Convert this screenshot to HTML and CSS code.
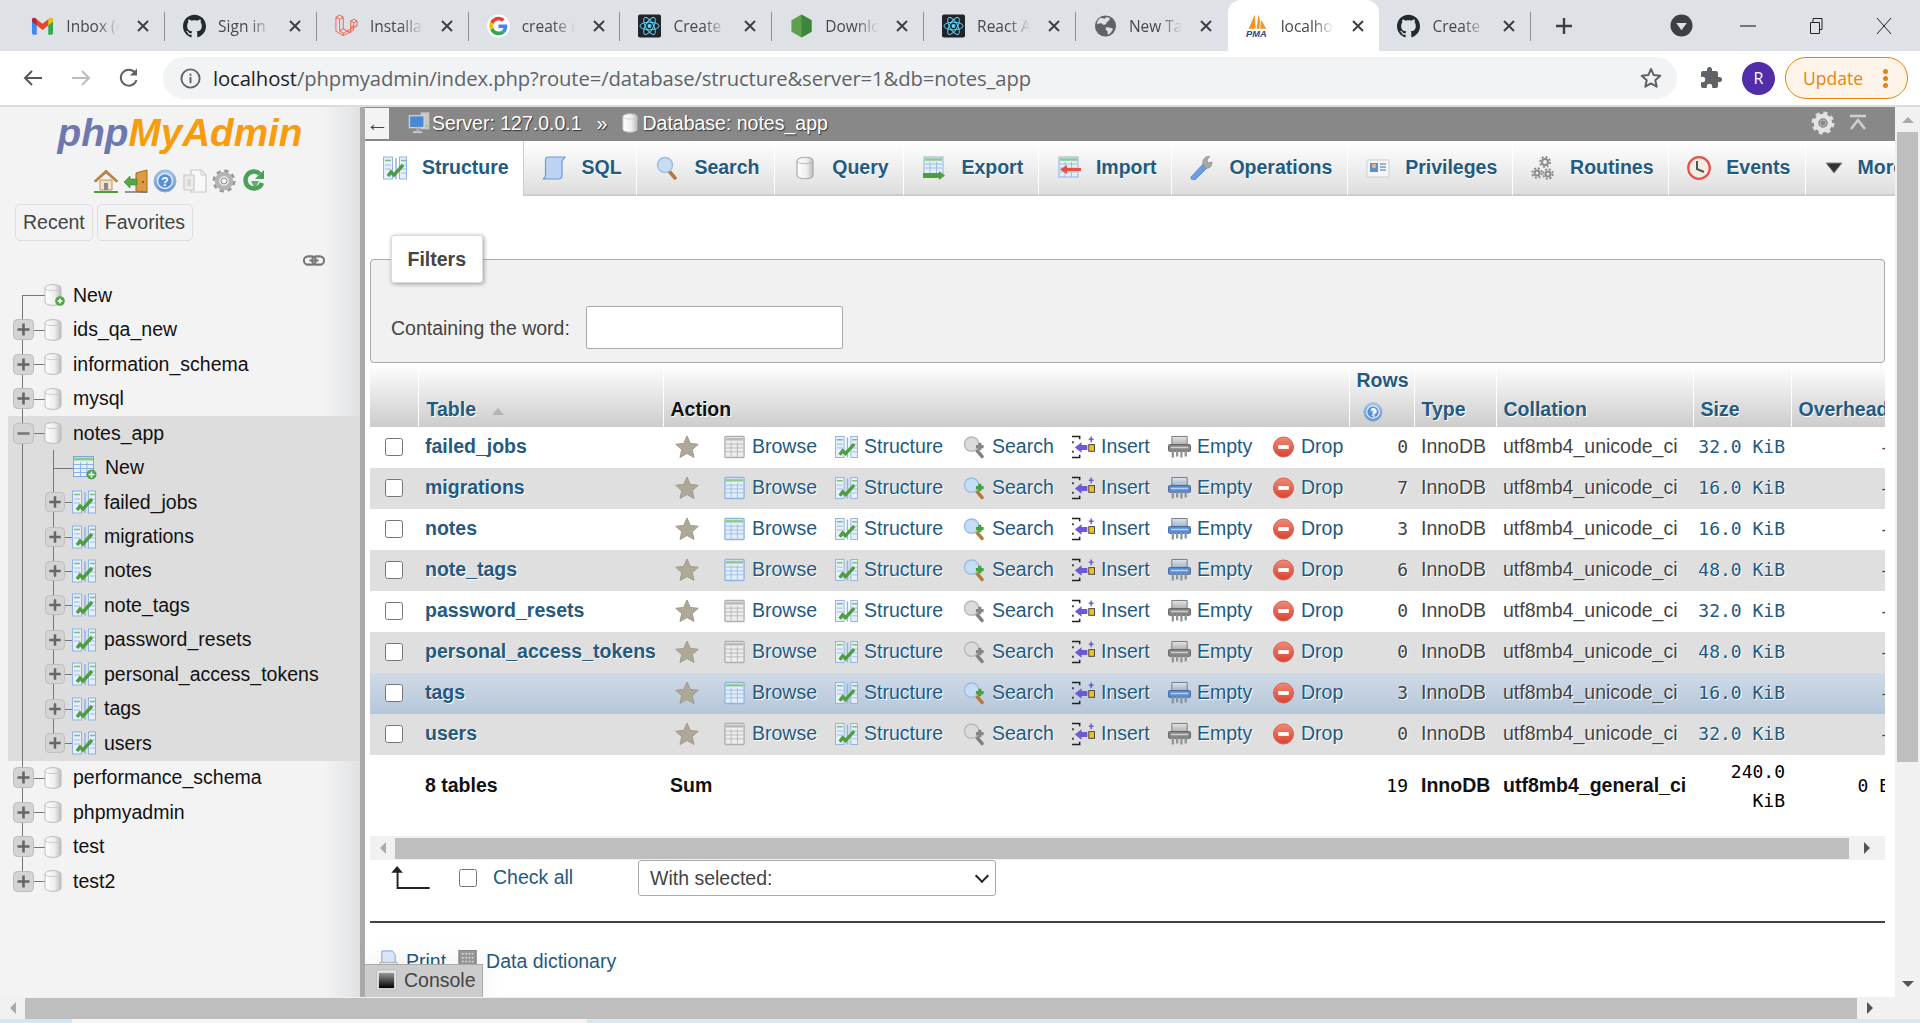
FILE: index.html
```html
<!DOCTYPE html>
<html lang="en">
<head>
<meta charset="utf-8">
<title>localhost / 127.0.0.1 / notes_app | phpMyAdmin</title>
<link rel="stylesheet" href="styles.css">
</head>
<body>
<svg class="defs" aria-hidden="true">
<defs>
<linearGradient id="g-db" x1="0" x2="1" y1="0" y2="0"><stop offset="0" stop-color="#fff"/><stop offset=".6" stop-color="#eee"/><stop offset="1" stop-color="#bbb"/></linearGradient>
<linearGradient id="g-red" x1="0" x2="0" y1="0" y2="1"><stop offset="0" stop-color="#ee8a78"/><stop offset="1" stop-color="#d8432f"/></linearGradient>
<linearGradient id="g-blue" x1="0" x2="0" y1="0" y2="1"><stop offset="0" stop-color="#a9c8ee"/><stop offset="1" stop-color="#5f8fd0"/></linearGradient>
<linearGradient id="g-con" x1="0" x2="0" y1="0" y2="1"><stop offset="0" stop-color="#999"/><stop offset="1" stop-color="#000"/></linearGradient>
<linearGradient id="g-shred" x1="0" x2="0" y1="0" y2="1"><stop offset="0" stop-color="#dfe5ec"/><stop offset="1" stop-color="#9fb0c6"/></linearGradient>
<symbol id="x-close" viewBox="0 0 14 14"><path d="M2 2l10 10M12 2L2 12" stroke="#3c4043" stroke-width="2" fill="none"/></symbol>
<symbol id="f-github" viewBox="0 0 24 24"><path fill="#24292e" d="M12 .297c-6.63 0-12 5.373-12 12 0 5.303 3.438 9.8 8.205 11.385.6.113.82-.258.82-.577 0-.285-.01-1.04-.015-2.04-3.338.724-4.042-1.61-4.042-1.61C4.422 18.07 3.633 17.7 3.633 17.7c-1.087-.744.084-.729.084-.729 1.205.084 1.838 1.236 1.838 1.236 1.07 1.835 2.809 1.305 3.495.998.108-.776.417-1.305.76-1.605-2.665-.3-5.466-1.332-5.466-5.93 0-1.31.465-2.38 1.235-3.22-.135-.303-.54-1.523.105-3.176 0 0 1.005-.322 3.3 1.23.96-.267 1.98-.399 3-.405 1.02.006 2.04.138 3 .405 2.28-1.552 3.285-1.23 3.285-1.23.645 1.653.24 2.873.12 3.176.765.84 1.23 1.91 1.23 3.22 0 4.61-2.805 5.625-5.475 5.92.42.36.81 1.096.81 2.22 0 1.606-.015 2.896-.015 3.286 0 .315.21.69.825.57C20.565 22.092 24 17.592 24 12.297c0-6.627-5.373-12-12-12"/></symbol>
<symbol id="f-gmail" viewBox="0 0 24 24"><path fill="#4285f4" d="M1 5.5C1 3.5 3.2 2.6 4.6 3.9L6 5v16H2.6C1.7 21 1 20.3 1 19.4z"/><path fill="#34a853" d="M18 5l1.4-1.1C20.8 2.6 23 3.5 23 5.5v13.9c0 .9-.7 1.6-1.6 1.6H18z"/><path fill="#ea4335" d="M6 5l6 4.7L18 5v6.5l-6 4.7-6-4.7z"/><path fill="#fbbc04" d="M18 5l1.4-1.1C20.8 2.6 23 3.5 23 5.5v1.7l-5 4.3z"/><path fill="#c5221f" d="M1 5.5C1 3.5 3.2 2.6 4.6 3.9L6 5v6.5L1 7.2z"/></symbol>
<symbol id="f-laravel" viewBox="0 0 25 26"><path fill="none" stroke="#ef6a5c" stroke-width="1.1" stroke-linejoin="round" d="M1 3.5l4-2.3 4 2.300v12.500l8 4.500M1 3.500v15l8 5 11-6V13l-3 1.700M5 5.800l4-2.300M1 3.500l4 2.300v12.500l4 2.500m0 2.700v-2.700l11-6M5 18.300l4-2.300m8 4.500V7.500m0 0l3.500-2 3.500 2v5.200l-3.500 2M17 7.500l3.500 1.800 3.500-1.800m-3.500 1.800v5"/></symbol>
<symbol id="f-google" viewBox="-6 -6 60 60"><circle cx="24" cy="24" r="30" fill="#fff"/><path fill="#EA4335" d="M24 9.500c3.540 0 6.710 1.220 9.210 3.600l6.850-6.850C35.900 2.380 30.470 0 24 0 14.620 0 6.510 5.380 2.560 13.220l7.980 6.190C12.430 13.720 17.740 9.500 24 9.500z"/><path fill="#4285F4" d="M46.980 24.550c0-1.570-.15-3.090-.38-4.550H24v9.020h12.940c-.58 2.960-2.260 5.480-4.780 7.180l7.730 6c4.510-4.180 7.090-10.360 7.090-17.650z"/><path fill="#FBBC05" d="M10.530 28.590c-.48-1.450-.76-2.990-.76-4.590s.27-3.140.76-4.590l-7.980-6.190C.92 16.460 0 20.120 0 24c0 3.880.92 7.540 2.560 10.780l7.970-6.190z"/><path fill="#34A853" d="M24 48c6.480 0 11.930-2.130 15.890-5.810l-7.730-6c-2.150 1.450-4.920 2.300-8.160 2.300-6.260 0-11.570-4.220-13.470-9.910l-7.980 6.190C6.510 42.620 14.620 48 24 48z"/></symbol>
<symbol id="f-react" viewBox="0 0 24 24"><rect width="24" height="24" rx="2" fill="#20232a"/><g fill="none" stroke="#61dafb" stroke-width="1"><ellipse cx="12" cy="12" rx="10" ry="4"/><ellipse cx="12" cy="12" rx="10" ry="4" transform="rotate(60 12 12)"/><ellipse cx="12" cy="12" rx="10" ry="4" transform="rotate(120 12 12)"/></g><circle cx="12" cy="12" r="2" fill="#61dafb"/></symbol>
<symbol id="f-node" viewBox="0 0 24 24"><path fill="#5fa04e" d="M12 0l10.500 6v12L12 24 1.500 18V6z"/><path fill="#3e863d" d="M12 0l10.500 6v12L12 24z"/></symbol>
<symbol id="f-globe" viewBox="0 0 24 24"><circle cx="12" cy="12" r="11" fill="#5f6368"/><path fill="#dee1e6" d="M7 3.500l4 1 2-2 4 1.500-2 3-2 1v2l-3 1-2-2-3 .5-2 1c0-3 1.500-5.500 4-7zM13 13l5 1 2 1-2.500 4-3 2.500-.5-4-2-2z"/></symbol>
<symbol id="f-pma" viewBox="0 0 26 26"><path fill="#f7941d" d="M3 16L10 0l1 16zM12 16l2-16 2 8-1 8zM16 16l1-10 6 10z"/><text x="0" y="25" font-family="Liberation Sans, sans-serif" font-size="10.500" font-weight="700" font-style="italic" fill="#2f3f86">PMA</text></symbol>
<symbol id="b-back" viewBox="0 0 24 24"><path d="M21 12H4m7-7l-7 7 7 7" fill="none" stroke="currentColor" stroke-width="2"/></symbol>
<symbol id="b-fwd" viewBox="0 0 24 24"><path d="M3 12h17m-7-7l7 7-7 7" fill="none" stroke="currentColor" stroke-width="2"/></symbol>
<symbol id="b-reload" viewBox="0 0 24 24"><path d="M19.500 14A8 8 0 1 1 18 6.500" fill="none" stroke="#5f6368" stroke-width="2"/><path d="M20 2.500v7h-7z" fill="#5f6368"/></symbol>
<symbol id="b-info" viewBox="0 0 24 24"><circle cx="12" cy="12" r="9.500" fill="none" stroke="#5f6368" stroke-width="2"/><path d="M11 10.500h2V17h-2zM11 7h2v2h-2z" fill="#5f6368"/></symbol>
<symbol id="b-star" viewBox="0 0 24 24"><path d="M12 3l2.700 6.100 6.600.7-5 4.400 1.400 6.500L12 17.400 6.300 20.700l1.400-6.500-5-4.400 6.600-.7z" fill="none" stroke="#5f6368" stroke-width="2" stroke-linejoin="round"/></symbol>
<symbol id="b-puzzle" viewBox="0 0 24 24"><path fill="#5f6368" d="M20.500 11H19V7a2 2 0 0 0-2-2h-4V3.500a2.500 2.500 0 0 0-5 0V5H4a2 2 0 0 0-2 2v3.800h1.500a2.700 2.700 0 0 1 0 5.400H2V20a2 2 0 0 0 2 2h3.800v-1.500a2.700 2.700 0 0 1 5.400 0V22H17a2 2 0 0 0 2-2v-4h1.500a2.500 2.500 0 0 0 0-5z"/></symbol>
<symbol id="i-db" viewBox="0 0 18 22"><path d="M1 4c0-4.500 16-4.500 16 0v14c0 4.500-16 4.500-16 0z" fill="url(#g-db)" stroke="#bbb"/><path d="M1 4c0 3.500 16 3.500 16 0" fill="none" stroke="#ccc"/></symbol>
<symbol id="i-dbnew" viewBox="0 0 21 22"><path d="M1 4c0-4.500 16-4.500 16 0v14c0 4.500-16 4.500-16 0z" fill="url(#g-db)" stroke="#bbb"/><path d="M1 4c0 3.500 16 3.500 16 0" fill="none" stroke="#ccc"/><circle cx="16" cy="17" r="4.800" fill="#4fa544"/><path d="M13.500 17h5M16 14.500v5" stroke="#fff" stroke-width="1.500"/></symbol>
<symbol id="i-plus" viewBox="0 0 21 21"><rect x=".5" y=".5" width="20" height="20" rx="4" fill="#d4d4d4" stroke="#bdbdbd"/><path d="M4.500 10.500h12M10.500 4.500v12" stroke="#666" stroke-width="2.600"/></symbol>
<symbol id="i-minus" viewBox="0 0 21 21"><rect x=".5" y=".5" width="20" height="20" rx="4" fill="#d4d4d4" stroke="#bdbdbd"/><path d="M4.500 10.500h12" stroke="#777" stroke-width="2.600"/></symbol>
<symbol id="i-struct" viewBox="0 0 24 24"><rect x=".5" y="1" width="9" height="22" fill="#e6effa" stroke="#8fb3e4"/><rect x="16.500" y="1" width="7" height="22" fill="#e6effa" stroke="#8fb3e4"/><path d="M2 4.500h6M18 4.500h5" stroke="#7ec07a" stroke-width="1.500"/><path d="M2 9h6M2 13h6M18 9h5M18 13h5M18 17h5" stroke="#9dbde6"/><path d="M13 2v21" stroke="#8fb3e4" stroke-width="1.500"/><path d="M5 20l3-4 3 3 9-10" fill="none" stroke="#4f9e3d" stroke-width="3.400"/></symbol>
<symbol id="i-tnew" viewBox="0 0 24 24"><rect x=".5" y=".5" width="20" height="20" fill="#e6effa" stroke="#7fa6de"/><path d="M1 3h19" stroke="#8ec98a" stroke-width="3"/><path d="M1 8.500h19M1 12.500h19M1 16.500h19M7.500 6v14M14 6v14" stroke="#8fb3e4"/><circle cx="18.500" cy="18.500" r="5" fill="#4fa544"/><path d="M15.500 18.500h6M18.500 15.500v6" stroke="#fff" stroke-width="1.600"/></symbol>
<symbol id="i-browse" viewBox="0 0 24 24"><rect x="2" y="1" width="20" height="22" rx="1" fill="#e3eefb" stroke="#8fb3e4" stroke-width="1.400"/><path d="M3 4h18" stroke="#8ec98a" stroke-width="2.500"/><path d="M3 9h18M3 13h18M3 17h18M8.500 7v15M15 7v15" stroke="#9dbde6"/></symbol>
<symbol id="i-search" viewBox="0 0 24 24"><path d="M14 15l6 7" stroke="#b5793a" stroke-width="3.500" stroke-linecap="round"/><circle cx="9" cy="9" r="7.500" fill="#c6def5" stroke="#9dbde0" stroke-width="1.500"/><path d="M13.500 11.500h8M17.500 7.500v8" stroke="#49a03e" stroke-width="3.400"/></symbol>
<symbol id="i-find" viewBox="0 0 24 24"><path d="M14 15l6 7" stroke="#b5793a" stroke-width="3.500" stroke-linecap="round"/><circle cx="10" cy="9" r="7.500" fill="#c6def5" stroke="#9dbde0" stroke-width="1.500"/></symbol>
<symbol id="i-insert" viewBox="0 0 24 24"><path d="M0 1h8v3M0 23h8v-3" fill="none" stroke="#222" stroke-width="1.600"/><path d="M1 6v2M1 16v2" stroke="#222" stroke-width="1.600"/><path d="M3 12.500l7-5.500v3h6v5h-6v3z" fill="#6a5ad6"/><rect x="17.500" y="9.500" width="6" height="7" fill="#f0c020" stroke="#444"/><path d="M20 1v6M17.500 4h5" stroke="#6a5ad6" stroke-width="1.500"/></symbol>
<symbol id="i-empty" viewBox="0 0 24 24"><path d="M4 1h16v9H4z" fill="url(#g-shred)" stroke="#6d7a8c"/><rect x=".5" y="9.500" width="23" height="7" rx="1" fill="#5b8ed6" stroke="#47659a"/><path d="M3 12.500h18" stroke="#bcd4f4" stroke-width="1.500"/><path d="M5 16v7M9.500 16v6M14 16v7M18.500 16v6" stroke="#8b95a0" stroke-width="2.400"/></symbol>
<symbol id="i-drop" viewBox="0 0 24 24"><circle cx="12" cy="12" r="10.500" fill="url(#g-red)" stroke="#d8604f"/><rect x="6.500" y="10" width="11" height="4" fill="#fff"/></symbol>
<symbol id="i-fav" viewBox="0 0 24 24"><path d="M12 1l3.300 7.400 8 .9-6 5.300 1.700 7.900L12 18.500l-7 4 1.700-7.900-6-5.300 8-.9z" fill="#aea898" stroke="#a19b8b" stroke-linejoin="round"/></symbol>
<symbol id="i-help" viewBox="0 0 24 24"><circle cx="12" cy="12" r="11" fill="url(#g-blue)" stroke="#8fb4e4"/><circle cx="12" cy="12" r="7.500" fill="#5a8fd2" stroke="#e2edfa" stroke-width="1.500"/><text x="12" y="16.500" text-anchor="middle" font-family="Liberation Sans, sans-serif" font-size="12" font-weight="700" fill="#fff">?</text></symbol>
<symbol id="i-home" viewBox="0 0 24 24"><path d="M6 11h12v10H6z" fill="#efe2c8" stroke="#b59a6a"/><rect x="10" y="14" width="4" height="7" fill="#888"/><path d="M0 12L12 1l12 11-2 1L12 4 2 13z" fill="#c5863c" stroke="#9a6427" stroke-width=".6"/><path d="M0 22h24v2H0z" fill="#4f9e3d"/></symbol>
<symbol id="i-exit" viewBox="0 0 24 24"><path d="M12 4l11-3v23l-11-2z" fill="#dd9b3f" stroke="#a26d20"/><path d="M1 23h22" stroke="#777" stroke-width="1.500"/><path d="M0 13l6-6v3h7v6H6v3z" fill="#55a844" stroke="#3d7e30" stroke-width=".6"/><circle cx="19" cy="13" r="1" fill="#6b4410"/></symbol>
<symbol id="i-docs" viewBox="0 0 24 24"><path d="M8 1h10l5 5v17H8z" fill="#f8f8f8" stroke="#c9c9c9" stroke-width="1.200"/><path d="M1 6h10v15H1z" fill="#ececec" stroke="#c9c9c9" stroke-width="1.200"/><rect x="4" y="10" width="4" height="7" fill="#d8d8d8"/><path d="M18 1v5h5" fill="none" stroke="#c9c9c9"/></symbol>
<symbol id="i-gear" viewBox="0 0 24 24"><circle cx="12" cy="12" r="9.500" fill="none" stroke="#9a9a9a" stroke-width="4" stroke-dasharray="4 3.460"/><circle cx="12" cy="12" r="7" fill="none" stroke="#b5b5b5" stroke-width="4.500"/><circle cx="12" cy="12" r="3" fill="#f2f2f2" stroke="#8a8a8a"/></symbol>
<symbol id="i-gearw" viewBox="0 0 24 24"><circle cx="12" cy="12" r="9.500" fill="none" stroke="#ddd" stroke-width="4" stroke-dasharray="4 3.460"/><circle cx="12" cy="12" r="7" fill="none" stroke="#e4e4e4" stroke-width="4.500"/><circle cx="12" cy="12" r="3" fill="#888" stroke="#bbb"/></symbol>
<symbol id="i-reload" viewBox="0 0 24 24"><path d="M20 14a8.500 8.500 0 1 1-2-9" fill="none" stroke="#4aa05a" stroke-width="4.500"/><path d="M22 1v9h-9z" fill="#4aa05a"/><path d="M9 12h8l-4 8z" fill="#4aa05a" opacity=".85"/></symbol>
<symbol id="i-link" viewBox="0 0 24 12"><rect x="1" y="1.500" width="13" height="9" rx="4.500" fill="none" stroke="#777" stroke-width="2.200"/><rect x="10" y="1.500" width="13" height="9" rx="4.500" fill="none" stroke="#777" stroke-width="2.200"/><path d="M7 6h10" stroke="#777" stroke-width="2.200"/></symbol>
<symbol id="i-server" viewBox="0 0 24 24"><rect x="13" y="0" width="10" height="19" fill="#c8c8c8" stroke="#999"/><rect x="1" y="4" width="16" height="13" fill="#4a88d8" stroke="#d0d0d0" stroke-width="1.500"/><path d="M5 21h10v2H5z" fill="#ccc"/><path d="M8 17h4v4H8z" fill="#aaa"/><circle cx="20" cy="15" r="1" fill="#6c6"/></symbol>
<symbol id="i-sql" viewBox="0 0 24 24"><path d="M6 1h17l-3 4v14c0 3-2 4-4 4H1c2-1 2.500-2 2.500-4V4C3.500 2 4.500 1 6 1z" fill="#bcd3f1" stroke="#6f9ad6" stroke-width="1.200"/></symbol>
<symbol id="i-qdb" viewBox="0 0 24 24"><path d="M4 5c0-5 16-5 16 0v14c0 5-16 5-16 0z" fill="url(#g-db)" stroke="#a8a8a8" stroke-width="1.200"/><path d="M4 5c0 3.500 16 3.500 16 0" fill="none" stroke="#bbb"/></symbol>
<symbol id="i-export" viewBox="0 0 24 24"><rect x="2" y="1" width="19" height="17" fill="#e3eefb" stroke="#8fb3e4"/><path d="M3 3.500h17" stroke="#8ec98a" stroke-width="2.500"/><path d="M3 8h17M3 12h17M8 6v12M14.500 6v12" stroke="#9dbde6"/><path d="M1 17h16v-2l6 4.500-6 4.500v-2H1z" fill="#4f9e3d"/></symbol>
<symbol id="i-import" viewBox="0 0 24 24"><rect x="2" y="1" width="19" height="20" fill="#e3eefb" stroke="#8fb3e4"/><path d="M3 3.500h17" stroke="#8ec98a" stroke-width="2.500"/><path d="M3 8h17M3 12h17M3 16h17M8 6v15M14.500 6v15" stroke="#9dbde6"/><path d="M24 12H10V9l-7 4.500 7 4.500v-3h14z" fill="#e8503f"/></symbol>
<symbol id="i-wrench" viewBox="0 0 24 24"><path d="M1 21L13 8l4 4L5 24c-2 1-5-1-4-3z" fill="#6d9de0" stroke="#4f7dc0" stroke-width=".7"/><path d="M13 8c-1-4 2-8 7-8l-3 4 1 3 4-1c0 5-3 7-7 6z" fill="#a8a8a8" stroke="#888" stroke-width=".7"/></symbol>
<symbol id="i-priv" viewBox="0 0 24 24"><rect x="1" y="4" width="22" height="17" rx="1" fill="#f6f6f6" stroke="#cfcfcf"/><rect x="4" y="7" width="8" height="9" fill="#5b8fd0"/><circle cx="8" cy="10" r="2.200" fill="#e6b88a"/><path d="M14 8h6M14 11h6M14 14h6" stroke="#7a9cc6" stroke-width="1.500"/></symbol>
<symbol id="i-routines" viewBox="0 0 24 24"><g fill="none" stroke="#8a8a8a"><circle cx="14" cy="6" r="3" stroke-width="2"/><circle cx="14" cy="6" r="5" stroke-width="1.800" stroke-dasharray="2 1.900"/><circle cx="6" cy="17" r="2.500" stroke-width="2"/><circle cx="6" cy="17" r="4.800" stroke-width="1.800" stroke-dasharray="2 1.800"/><circle cx="17" cy="18" r="2.500" stroke-width="2"/><circle cx="17" cy="18" r="4.800" stroke-width="1.800" stroke-dasharray="2 1.800"/></g></symbol>
<symbol id="i-clock" viewBox="0 0 24 24"><circle cx="12" cy="12" r="10.800" fill="#f1eee6" stroke="#e8504a" stroke-width="2.200"/><path d="M10 5v8l7 3" fill="none" stroke="#555" stroke-width="2"/></symbol>
<symbol id="i-tri" viewBox="0 0 18 12"><path d="M1 1h16L9 11z" fill="#333" stroke="#888"/></symbol>
<symbol id="i-print" viewBox="0 0 24 24"><path d="M5 1h11l3 4v9H5z" fill="#dfeafa" stroke="#7ea4dc"/><path d="M0 24l3-11h18l3 11z" fill="#eee" stroke="#b9b9b9"/></symbol>
<symbol id="i-dict" viewBox="0 0 24 24"><rect x="2" y="0" width="18" height="18" fill="#9a9a9a" stroke="#777"/><path d="M5 4h12M5 8h12M5 12h12" stroke="#dedede" stroke-width="1.500" stroke-dasharray="2 1.500"/><rect x="0" y="16" width="24" height="8" fill="#aab3dc"/><rect x="16" y="18" width="6" height="6" fill="#fff" stroke="#444"/></symbol>
<symbol id="i-console" viewBox="0 0 22 22"><rect x=".5" y=".5" width="21" height="21" rx="2" fill="#e6e6e6" stroke="#bbb"/><rect x="3" y="3.500" width="16" height="16" fill="url(#g-con)"/></symbol>
<symbol id="i-ltr" viewBox="0 0 42 24"><path d="M7 0l6 7H8.500v15H41v2H6.500V7H1z" fill="#222"/></symbol>
</defs>
</svg>

<header class="tabstrip">
  <div class="tab"><svg class="fav"><use href="#f-gmail"/></svg><span class="tab-title">Inbox (4)</span><svg class="tab-x"><use href="#x-close"/></svg></div>
  <div class="tab"><svg class="fav"><use href="#f-github"/></svg><span class="tab-title">Sign in to GitHub</span><svg class="tab-x"><use href="#x-close"/></svg></div>
  <div class="tab"><svg class="fav"><use href="#f-laravel"/></svg><span class="tab-title">Installation</span><svg class="tab-x"><use href="#x-close"/></svg></div>
  <div class="tab"><svg class="fav"><use href="#f-google"/></svg><span class="tab-title">create react</span><svg class="tab-x"><use href="#x-close"/></svg></div>
  <div class="tab"><svg class="fav"><use href="#f-react"/></svg><span class="tab-title">Create a New</span><svg class="tab-x"><use href="#x-close"/></svg></div>
  <div class="tab"><svg class="fav"><use href="#f-node"/></svg><span class="tab-title">Download</span><svg class="tab-x"><use href="#x-close"/></svg></div>
  <div class="tab"><svg class="fav"><use href="#f-react"/></svg><span class="tab-title">React App</span><svg class="tab-x"><use href="#x-close"/></svg></div>
  <div class="tab tab-nosep"><svg class="fav"><use href="#f-globe"/></svg><span class="tab-title">New Tab</span><svg class="tab-x"><use href="#x-close"/></svg></div>
  <div class="tab tab-active"><svg class="fav"><use href="#f-pma"/></svg><span class="tab-title">localhost</span><svg class="tab-x"><use href="#x-close"/></svg></div>
  <div class="tab"><svg class="fav"><use href="#f-github"/></svg><span class="tab-title">Create a new</span><svg class="tab-x"><use href="#x-close"/></svg></div>
  <svg class="newtab" viewBox="0 0 20 20"><path d="M10 2v16M2 10h16" stroke="#3c4043" stroke-width="2.400"/></svg>
  <svg class="tabsearch" viewBox="0 0 24 24"><circle cx="12" cy="12" r="11.500" fill="#3c4043"/><path d="M6.500 9.500h11L12 17z" fill="#dee1e6"/></svg>
  <div class="winbtns">
    <svg viewBox="0 0 14 14"><path d="M0 7h14" stroke="#222"/></svg>
    <svg viewBox="0 0 14 16"><path d="M1.500 4.500h9v11h-9zM4 4.500v-4h9v11h-2.500" fill="none" stroke="#222"/></svg>
    <svg viewBox="0 0 16 16"><path d="M1 0l14 16M15 0L1 16" stroke="#222"/></svg>
  </div>
</header>

<nav class="toolbar">
  <svg class="tb-ic tb-dark"><use href="#b-back"/></svg>
  <svg class="tb-ic tb-dim"><use href="#b-fwd"/></svg>
  <svg class="tb-ic"><use href="#b-reload"/></svg>
  <div class="omnibox">
    <svg class="omni-info"><use href="#b-info"/></svg>
    <span class="url"><b>localhost</b>/phpmyadmin/index.php?route=/database/structure&amp;server=1&amp;db=notes_app</span>
    <svg class="omni-star"><use href="#b-star"/></svg>
  </div>
  <svg class="tb-puzzle"><use href="#b-puzzle"/></svg>
  <span class="avatar">R</span>
  <div class="update"><span>Update</span><i class="dots"></i></div>
</nav>
<div class="chrome-line"></div>

<div class="viewport">
  <aside class="sidebar">
    <div class="logo"><span class="logo-php">php</span><span class="logo-my">MyAdmin</span></div>
    <div class="quick">
      <svg><use href="#i-home"/></svg><svg><use href="#i-exit"/></svg><svg><use href="#i-help"/></svg><svg><use href="#i-docs"/></svg><svg><use href="#i-gear"/></svg><svg><use href="#i-reload"/></svg>
    </div>
    <div class="recent"><button>Recent</button><button>Favorites</button></div>
    <div class="linkrow"><svg><use href="#i-link"/></svg></div>
    <ul class="tree">
      <li class="node node-first node-new"><svg class="dbicon-new"><use href="#i-dbnew"/></svg><a>New</a></li>
      <li class="node"><svg class="exp"><use href="#i-plus"/></svg><svg class="dbicon"><use href="#i-db"/></svg><a>ids_qa_new</a></li>
      <li class="node"><svg class="exp"><use href="#i-plus"/></svg><svg class="dbicon"><use href="#i-db"/></svg><a>information_schema</a></li>
      <li class="node"><svg class="exp"><use href="#i-plus"/></svg><svg class="dbicon"><use href="#i-db"/></svg><a>mysql</a></li>
      <li class="group">
        <div class="node"><svg class="exp"><use href="#i-minus"/></svg><svg class="dbicon"><use href="#i-db"/></svg><a>notes_app</a></div>
        <ul class="sub">
          <li class="node2 node2-new"><svg class="tbl"><use href="#i-tnew"/></svg><a>New</a></li>
          <li class="node2"><svg class="exp2"><use href="#i-plus"/></svg><svg class="tbl"><use href="#i-struct"/></svg><a>failed_jobs</a></li>
          <li class="node2"><svg class="exp2"><use href="#i-plus"/></svg><svg class="tbl"><use href="#i-struct"/></svg><a>migrations</a></li>
          <li class="node2"><svg class="exp2"><use href="#i-plus"/></svg><svg class="tbl"><use href="#i-struct"/></svg><a>notes</a></li>
          <li class="node2"><svg class="exp2"><use href="#i-plus"/></svg><svg class="tbl"><use href="#i-struct"/></svg><a>note_tags</a></li>
          <li class="node2"><svg class="exp2"><use href="#i-plus"/></svg><svg class="tbl"><use href="#i-struct"/></svg><a>password_resets</a></li>
          <li class="node2"><svg class="exp2"><use href="#i-plus"/></svg><svg class="tbl"><use href="#i-struct"/></svg><a>personal_access_tokens</a></li>
          <li class="node2"><svg class="exp2"><use href="#i-plus"/></svg><svg class="tbl"><use href="#i-struct"/></svg><a>tags</a></li>
          <li class="node2 node2-last"><svg class="exp2"><use href="#i-plus"/></svg><svg class="tbl"><use href="#i-struct"/></svg><a>users</a></li>
        </ul>
      </li>
      <li class="node"><svg class="exp"><use href="#i-plus"/></svg><svg class="dbicon"><use href="#i-db"/></svg><a>performance_schema</a></li>
      <li class="node"><svg class="exp"><use href="#i-plus"/></svg><svg class="dbicon"><use href="#i-db"/></svg><a>phpmyadmin</a></li>
      <li class="node"><svg class="exp"><use href="#i-plus"/></svg><svg class="dbicon"><use href="#i-db"/></svg><a>test</a></li>
      <li class="node node-last"><svg class="exp"><use href="#i-plus"/></svg><svg class="dbicon"><use href="#i-db"/></svg><a>test2</a></li>
    </ul>
  </aside>
  <div class="gutter"></div>

  <main class="content">
    <div class="topbar">
      <span class="collapse">←</span>
      <svg class="crumb-server"><use href="#i-server"/></svg><span class="crumb">Server: 127.0.0.1</span>
      <span class="crumb crumb-sep">»</span>
      <svg class="crumb-db"><use href="#i-db"/></svg><span class="crumb">Database: notes_app</span>
      <svg class="top-gear"><use href="#i-gearw"/></svg>
      <svg class="top-up" viewBox="0 0 18 18"><path d="M1 2h16M2 15l7-9 7 9" fill="none" stroke="#d0d0d0" stroke-width="2.600"/></svg>
    </div>
    <div class="menu">
      <a class="menu-item active"><svg><use href="#i-struct"/></svg>Structure</a>
      <a class="menu-item"><svg><use href="#i-sql"/></svg>SQL</a>
      <a class="menu-item"><svg><use href="#i-find"/></svg>Search</a>
      <a class="menu-item"><svg><use href="#i-qdb"/></svg>Query</a>
      <a class="menu-item"><svg><use href="#i-export"/></svg>Export</a>
      <a class="menu-item"><svg><use href="#i-import"/></svg>Import</a>
      <a class="menu-item"><svg><use href="#i-wrench"/></svg>Operations</a>
      <a class="menu-item"><svg><use href="#i-priv"/></svg>Privileges</a>
      <a class="menu-item"><svg><use href="#i-routines"/></svg>Routines</a>
      <a class="menu-item"><svg><use href="#i-clock"/></svg>Events</a>
      <a class="menu-item menu-more"><svg class="tri"><use href="#i-tri"/></svg>More</a>
    </div>

    <div class="page">
      <fieldset class="filters">
        <legend>Filters</legend>
        <label class="filter-label">Containing the word:</label><input class="filter-input" type="text">
      </fieldset>

      <div class="tablewrap">
        <table class="structure">
          <colgroup><col class="c1"><col class="c2"><col class="c3"><col class="c4"><col class="c5"><col class="c6"><col class="c7"><col class="c8"></colgroup>
          <thead>
            <tr>
              <th></th>
              <th class="lnk th-table">Table <i class="sort"></i></th>
              <th>Action</th>
              <th class="lnk th-rows"><span>Rows</span><svg class="th-help"><use href="#i-help"/></svg></th>
              <th class="lnk">Type</th>
              <th class="lnk">Collation</th>
              <th class="lnk">Size</th>
              <th class="lnk">Overhead</th>
            </tr>
          </thead>
          <tbody>
            <tr>
              <td class="ck"><input type="checkbox"></td><td class="nm">failed_jobs</td>
              <td><div class="acts"><svg class="a-ic"><use href="#i-fav"/></svg><a class="off"><svg><use href="#i-browse"/></svg>Browse</a><a><svg><use href="#i-struct"/></svg>Structure</a><a class="off"><svg><use href="#i-search"/></svg>Search</a><a><svg><use href="#i-insert"/></svg>Insert</a><a class="off"><svg><use href="#i-empty"/></svg>Empty</a><a><svg><use href="#i-drop"/></svg>Drop</a></div></td>
              <td class="num">0</td><td class="tx">InnoDB</td><td class="tx">utf8mb4_unicode_ci</td><td class="num lk">32.0 KiB</td><td class="num">-</td>
            </tr>
            <tr>
              <td class="ck"><input type="checkbox"></td><td class="nm">migrations</td>
              <td><div class="acts"><svg class="a-ic"><use href="#i-fav"/></svg><a><svg><use href="#i-browse"/></svg>Browse</a><a><svg><use href="#i-struct"/></svg>Structure</a><a><svg><use href="#i-search"/></svg>Search</a><a><svg><use href="#i-insert"/></svg>Insert</a><a><svg><use href="#i-empty"/></svg>Empty</a><a><svg><use href="#i-drop"/></svg>Drop</a></div></td>
              <td class="num">7</td><td class="tx">InnoDB</td><td class="tx">utf8mb4_unicode_ci</td><td class="num lk">16.0 KiB</td><td class="num">-</td>
            </tr>
            <tr>
              <td class="ck"><input type="checkbox"></td><td class="nm">notes</td>
              <td><div class="acts"><svg class="a-ic"><use href="#i-fav"/></svg><a><svg><use href="#i-browse"/></svg>Browse</a><a><svg><use href="#i-struct"/></svg>Structure</a><a><svg><use href="#i-search"/></svg>Search</a><a><svg><use href="#i-insert"/></svg>Insert</a><a><svg><use href="#i-empty"/></svg>Empty</a><a><svg><use href="#i-drop"/></svg>Drop</a></div></td>
              <td class="num">3</td><td class="tx">InnoDB</td><td class="tx">utf8mb4_unicode_ci</td><td class="num lk">16.0 KiB</td><td class="num">-</td>
            </tr>
            <tr>
              <td class="ck"><input type="checkbox"></td><td class="nm">note_tags</td>
              <td><div class="acts"><svg class="a-ic"><use href="#i-fav"/></svg><a><svg><use href="#i-browse"/></svg>Browse</a><a><svg><use href="#i-struct"/></svg>Structure</a><a><svg><use href="#i-search"/></svg>Search</a><a><svg><use href="#i-insert"/></svg>Insert</a><a><svg><use href="#i-empty"/></svg>Empty</a><a><svg><use href="#i-drop"/></svg>Drop</a></div></td>
              <td class="num">6</td><td class="tx">InnoDB</td><td class="tx">utf8mb4_unicode_ci</td><td class="num lk">48.0 KiB</td><td class="num">-</td>
            </tr>
            <tr>
              <td class="ck"><input type="checkbox"></td><td class="nm">password_resets</td>
              <td><div class="acts"><svg class="a-ic"><use href="#i-fav"/></svg><a class="off"><svg><use href="#i-browse"/></svg>Browse</a><a><svg><use href="#i-struct"/></svg>Structure</a><a class="off"><svg><use href="#i-search"/></svg>Search</a><a><svg><use href="#i-insert"/></svg>Insert</a><a class="off"><svg><use href="#i-empty"/></svg>Empty</a><a><svg><use href="#i-drop"/></svg>Drop</a></div></td>
              <td class="num">0</td><td class="tx">InnoDB</td><td class="tx">utf8mb4_unicode_ci</td><td class="num lk">32.0 KiB</td><td class="num">-</td>
            </tr>
            <tr>
              <td class="ck"><input type="checkbox"></td><td class="nm">personal_access_tokens</td>
              <td><div class="acts"><svg class="a-ic"><use href="#i-fav"/></svg><a class="off"><svg><use href="#i-browse"/></svg>Browse</a><a><svg><use href="#i-struct"/></svg>Structure</a><a class="off"><svg><use href="#i-search"/></svg>Search</a><a><svg><use href="#i-insert"/></svg>Insert</a><a class="off"><svg><use href="#i-empty"/></svg>Empty</a><a><svg><use href="#i-drop"/></svg>Drop</a></div></td>
              <td class="num">0</td><td class="tx">InnoDB</td><td class="tx">utf8mb4_unicode_ci</td><td class="num lk">48.0 KiB</td><td class="num">-</td>
            </tr>
            <tr class="hover">
              <td class="ck"><input type="checkbox"></td><td class="nm">tags</td>
              <td><div class="acts"><svg class="a-ic"><use href="#i-fav"/></svg><a><svg><use href="#i-browse"/></svg>Browse</a><a><svg><use href="#i-struct"/></svg>Structure</a><a><svg><use href="#i-search"/></svg>Search</a><a><svg><use href="#i-insert"/></svg>Insert</a><a><svg><use href="#i-empty"/></svg>Empty</a><a><svg><use href="#i-drop"/></svg>Drop</a></div></td>
              <td class="num">3</td><td class="tx">InnoDB</td><td class="tx">utf8mb4_unicode_ci</td><td class="num lk">16.0 KiB</td><td class="num">-</td>
            </tr>
            <tr>
              <td class="ck"><input type="checkbox"></td><td class="nm">users</td>
              <td><div class="acts"><svg class="a-ic"><use href="#i-fav"/></svg><a class="off"><svg><use href="#i-browse"/></svg>Browse</a><a><svg><use href="#i-struct"/></svg>Structure</a><a class="off"><svg><use href="#i-search"/></svg>Search</a><a><svg><use href="#i-insert"/></svg>Insert</a><a class="off"><svg><use href="#i-empty"/></svg>Empty</a><a><svg><use href="#i-drop"/></svg>Drop</a></div></td>
              <td class="num">0</td><td class="tx">InnoDB</td><td class="tx">utf8mb4_unicode_ci</td><td class="num lk">32.0 KiB</td><td class="num">-</td>
            </tr>
          </tbody>
          <tfoot>
            <tr>
              <th></th><th class="ft-nm">8 tables</th><th class="ft-sum">Sum</th>
              <th class="num">19</th><th class="ft-tx">InnoDB</th><th class="ft-tx">utf8mb4_general_ci</th><th class="num">240.0 KiB</th><th class="num">0 B</th>
            </tr>
          </tfoot>
        </table>
      </div>
      <div class="hscroll"><i class="arr-l"></i><span class="thumb"></span><i class="arr-r"></i></div>

      <div class="bulk">
        <svg class="ltr"><use href="#i-ltr"/></svg>
        <input type="checkbox" class="bulk-check"><label class="bulk-label">Check all</label>
        <div class="selectwrap"><select class="bulk-select"><option>With selected:</option></select></div>
      </div>
      <hr class="rule">
      <div class="links">
        <a><svg><use href="#i-print"/></svg>Print</a>
        <a><svg><use href="#i-dict"/></svg>Data dictionary</a>
      </div>
    </div>
    <div class="console"><svg><use href="#i-console"/></svg>Console</div>
  </main>

  <div class="vscroll"><i class="arr-u"></i><span class="vthumb"></span><i class="arr-d"></i></div>
</div>

<div class="pagescroll"><i class="arr-l"></i><span class="thumb"></span><i class="arr-r"></i></div>
<div class="peek"><i class="pk1"></i><i class="pk2"></i><i class="pk3"></i></div>
</body>
</html>
```
FILE: styles.css
```css
* { box-sizing: border-box; }
html, body { margin: 0; height: 100%; }
body {
  width: 1920px; height: 1023px; overflow: hidden;
  display: flex; flex-direction: column;
  background: #fff; color: #444;
  font: 19.5px "Liberation Sans", Arial, sans-serif;
}
.defs { position: absolute; width: 0; height: 0; }
ul { list-style: none; margin: 0; padding: 0; }
svg { display: block; flex: none; }

/* browser tab strip */
.tabstrip { height: 51px; flex: none; background: #dee1e6; display: flex; align-items: center; padding-left: 13.3px; position: relative; }
.tab { flex: 0 0 151.8px; height: 51px; display: flex; align-items: center; padding-left: 18px; position: relative; }
.tab::after { content: ""; position: absolute; right: 0; top: 12px; height: 29px; width: 1px; background: #8c8f94; }
.tab-nosep::after, .tab-active::after { display: none; }
.tab-active { background: #fff; border-radius: 13px 13px 0 0; }
.fav { width: 23px; height: 24px; margin-right: 12px; }
.tab-title {
  width: 56px; white-space: nowrap; overflow: hidden;
  font: 15.5px "Open Sans", sans-serif; color: #45494e;
  -webkit-mask-image: linear-gradient(to right, #000 55%, transparent 95%);
  mask-image: linear-gradient(to right, #000 55%, transparent 95%);
}
.tab-x { width: 14px; height: 14px; margin-left: 14px; }
.newtab { width: 20px; height: 20px; margin-left: 23px; }
.tabsearch { width: 23px; height: 23px; margin-left: 96px; }
.winbtns { display: flex; align-items: center; margin-left: 47px; gap: 52px; }
.winbtns svg { width: 16px; height: 16px; }

/* browser toolbar */
.toolbar { height: 54px; flex: none; background: #fff; display: flex; align-items: center; padding-left: 21px; }
.tb-ic { width: 24px; height: 24px; margin-right: 24px; color: #5f6368; }
.tb-dark { color: #55585c; }
.tb-dim { color: #b9bcc0; }
.omnibox { width: 1514px; height: 42px; margin-left: -2px; border-radius: 21px; background: #f1f3f4; display: flex; align-items: center; padding: 0 14px 0 16px; }
.omni-info { width: 23px; height: 23px; margin-right: 11px; }
.url { flex: 1; font: 20.25px "Open Sans", sans-serif; color: #5f6368; white-space: nowrap; letter-spacing: -.1px; }
.url b { font-weight: 400; color: #202124; }
.omni-star { width: 24px; height: 24px; }
.tb-puzzle { width: 24px; height: 24px; margin-left: 22px; }
.avatar { width: 33px; height: 33px; margin-left: 19px; border-radius: 50%; background: #512da8; color: #fff; font: 16px "Open Sans", sans-serif; display: flex; align-items: center; justify-content: center; }
.update { width: 123px; height: 42px; margin-left: 10px; border: 1.5px solid #e8830c; border-radius: 21px; background: #fef4ea; color: #e8830c; font: 17.5px "Open Sans", sans-serif; display: flex; align-items: center; padding-left: 17px; position: relative; }
.dots { position: absolute; right: 19px; top: 11px; width: 5px; height: 5px; border-radius: 50%; background: #e8830c; box-shadow: 0 7px 0 #e8830c, 0 14px 0 #e8830c; }
.chrome-line { height: 2px; flex: none; background: #dcdcdc; }

/* phpMyAdmin frame */
.viewport { flex: none; height: 890px; display: flex; overflow: hidden; }
.sidebar { width: 360px; flex: none; background: linear-gradient(to right, #f3f3f3 90%, #dfe2e4 100%); overflow: hidden; color: #111; }
.gutter { width: 5px; flex: none; background: #a9a9a9; }
.logo { margin-top: 3px; height: 46px; text-align: center; font: italic 700 38.7px/46px "Liberation Sans", sans-serif; }
.logo-php { color: #6c78af; }
.logo-my { color: #f89c0e; }
.quick { display: flex; justify-content: center; gap: 5.5px; margin-top: 13px; height: 24px; }
.quick svg { width: 24px; height: 24px; }
.recent { display: flex; gap: 4px; margin: 11px 0 0 15px; }
.recent button { height: 37px; padding: 0 7px; background: #f3f3f3; border: 1px solid #ddd; border-radius: 5px; color: #444; font: 19.5px "Liberation Sans", sans-serif; }
.linkrow { display: flex; justify-content: flex-end; padding-right: 35px; margin-top: 14px; height: 23px; }
.linkrow svg { width: 22px; height: 11px; }
.tree { position: relative; }
.node { position: relative; height: 34.47px; display: flex; align-items: center; padding-left: 13px; white-space: nowrap; }
.node::before { content: ""; position: absolute; left: 22px; top: 0; bottom: 0; width: 1px; background: #777; }
.node::after { content: ""; position: absolute; left: 22px; top: 50%; width: 24px; height: 1px; background: #777; }
.node-first::before { top: 50%; }
.node-last::before { bottom: 50%; }
.node-new { padding-left: 44px; }
.exp { width: 21px; height: 21px; margin-right: 10px; position: relative; z-index: 1; }
.dbicon { width: 18px; height: 22px; margin-right: 11px; position: relative; z-index: 1; }
.dbicon-new { width: 21px; height: 22px; margin-right: 8px; position: relative; z-index: 1; }
.group { background: #ddd; margin-left: 8px; }
.group .node { margin-left: -8px; padding-left: 13px; }
.sub { position: relative; margin-left: -8px; }
.sub::before { content: ""; position: absolute; left: 22px; top: 0; bottom: 0; width: 1px; background: #777; }
.node2 { position: relative; height: 34.47px; display: flex; align-items: center; padding-left: 45px; white-space: nowrap; }
.node2::before { content: ""; position: absolute; left: 53px; top: 0; bottom: 0; width: 1px; background: #777; }
.node2::after { content: ""; position: absolute; left: 53px; top: 50%; width: 20px; height: 1px; background: #777; }
.node2-last::before { bottom: 50%; }
.node2-new { padding-left: 73px; }
.exp2 { width: 20px; height: 20px; margin-right: 7px; position: relative; z-index: 1; }
.tbl { width: 24px; height: 24px; margin-right: 8px; position: relative; z-index: 1; }

.content { width: 1530px; flex: none; position: relative; overflow: hidden; background: #fff; }
.topbar { height: 34px; background: #888; display: flex; align-items: center; color: #fff; padding-bottom: 2px; }
.collapse { width: 24px; height: 31px; background: #f3f3f3; color: #444; font-size: 23px; line-height: 31px; display: flex; align-items: center; justify-content: center; margin-right: 19px; align-self: flex-start; margin-top: 1px; }
.crumb { font-size: 19.5px; text-shadow: 1px 1px 1px #333; white-space: nowrap; }
.crumb-server { width: 23px; height: 22px; margin-right: 1px; }
.crumb-sep { margin: 0 15px 0 15px; }
.crumb-db { width: 16px; height: 20px; margin-right: 4px; }
.top-gear { width: 24px; height: 24px; margin-left: auto; }
.top-up { width: 18px; height: 18px; margin: 0 28px 0 14px; }
.menu { height: 55px; display: flex; overflow: hidden; }
.menu-item { flex: none; display: flex; align-items: center; gap: 15px; padding: 0 14.8px 0 18px; background: linear-gradient(#fff, #dedede); border-right: 1px solid #fff; border-bottom: 2px solid #ccc; color: #235a81; font-weight: 700; white-space: nowrap; text-shadow: 0 1px 0 #fff; }
.menu-item svg { width: 24px; height: 24px; }
.menu-item.active { background: #fff; border-bottom: 0; border-right: 1px solid #ccc; padding-bottom: 2px; }
.menu-more { gap: 15px; padding-left: 18.5px; }
.menu-item .tri { width: 18px; height: 12px; }

.page { padding: 0 10px 0 5px; }
.filters { margin: 39px 0 0; padding: 23px 16px 13px 20px; border: 1px solid #aaa; border-radius: 4px; background: #f1f1f1; display: flex; align-items: center; min-width: 0; }
.filters legend { height: 48px; padding: 0 15.5px; margin: 0; background: #fff; border: 1px solid #ddd; border-radius: 3px; box-shadow: 1px 1px 4px #999; color: #444; font-weight: 700; line-height: 46px; }
.filter-label { color: #444; padding-top: 2px; }
.filter-input { width: 257px; height: 43px; margin: 0 0 0 16px; background: #fff; border: 1px solid #aaa; border-radius: 2px; }

.tablewrap { width: 1515px; overflow: hidden; margin-top: 1px; }
.structure { width: 1526px; table-layout: fixed; border-collapse: collapse; }
.c1 { width: 48px; } .c2 { width: 245px; } .c3 { width: 686px; } .c4 { width: 65px; }
.c5 { width: 82px; } .c6 { width: 197px; } .c7 { width: 98px; } .c8 { width: 105px; }
.structure thead tr { height: 63px; }
.structure thead th { background: linear-gradient(#fff, #ccc); border-right: 1px solid #fff; border-bottom: 1px solid #fff; vertical-align: bottom; text-align: left; padding: 0 0 4px 7px; color: #111; font-weight: 700; text-shadow: 1px 1px 0 #fff; white-space: nowrap; line-height: 27px; }
.structure thead th:last-child { border-right: 0; }
.structure thead th.lnk { color: #235a81; }
.structure thead th.th-table { padding-left: 8px; }
.structure thead th.th-rows { padding-bottom: 5px; }
.sort { display: inline-block; width: 0; height: 0; margin-left: 11px; border: 6px solid transparent; border-top: 0; border-bottom: 7px solid #b5b5b5; vertical-align: 1px; }
.th-rows span { display: block; }
.th-help { width: 20px; height: 20px; margin: 8px 0 0 6px; }
.structure tbody tr { height: 41px; background: #fff; }
.structure tbody tr:nth-child(even) { background: #dfdfdf; }
.structure tbody tr.hover td { background: linear-gradient(#d0dae6, #b6c7da); }
.structure td { padding: 0 0 2px 7px; white-space: nowrap; overflow: hidden; text-shadow: 1px 1px 0 #fff; }
.ck input { width: 18px; height: 18px; margin: 0 0 0 8px; display: block; accent-color: #666; }
.nm { color: #235a81; font-weight: 700; }
.acts { display: grid; grid-template-columns: 48px 112px 128px 109px 96px 104px 71px; align-items: center; padding-left: 5px; }
.a-ic { width: 24px; height: 24px; }
.acts a { display: flex; align-items: center; gap: 6px; color: #235a81; }
.acts a svg { width: 23px; height: 24px; }
.off svg { filter: grayscale(1); }
.num { text-align: right; font-family: "DejaVu Sans Mono", monospace; font-size: 18px; padding: 0 6px 2px 0 !important; }
.lk { color: #235a81; }
.tx { color: #444; }
.structure tfoot tr { height: 81px; }
.structure tfoot th { text-align: left; padding: 0 0 20px 7px; color: #111; font-weight: 700; white-space: nowrap; }
.structure tfoot th.num { text-align: right; font-weight: 400; color: #000; line-height: 29px; white-space: normal; padding: 0 6px 20px 0 !important; }
.hscroll { width: 1515px; height: 24px; background: #f1f1f1; display: flex; align-items: center; }
.thumb { flex: 1; height: 21px; background: #bebebe; }
.arr-l, .arr-r { flex: none; width: 25px; display: flex; align-items: center; justify-content: center; }
.hscroll .arr-r { width: 36px; }
.arr-l::before { content: ""; border: 6px solid transparent; border-left: 0; border-right: 6px solid #aaa; }
.arr-r::before { content: ""; border: 6px solid transparent; border-right: 0; border-left: 6px solid #555; }

.bulk { height: 37px; display: flex; align-items: center; margin-top: -1px; padding-left: 20px; }
.ltr { width: 41px; height: 23px; margin-right: 28px; }
.bulk-check { width: 18px; height: 18px; margin: 0 16px 0 0; }
.bulk-label { color: #235a81; width: 145px; }
.selectwrap { position: relative; width: 358px; height: 36px; }
.selectwrap::after { content: ""; position: absolute; right: 9px; top: 11px; width: 8px; height: 8px; border-right: 2px solid #222; border-bottom: 2px solid #222; transform: rotate(45deg); pointer-events: none; }
.bulk-select { width: 100%; height: 100%; padding-left: 11px; -webkit-appearance: none; appearance: none; font: 19.5px "Liberation Sans", sans-serif; color: #444; background: #fff; border: 1px solid #aaa; border-radius: 3px; }
.rule { height: 2px; margin: 25px 0 0; border: 0; background: #444; }
.links { display: flex; gap: 11px; margin-top: 24px; padding-left: 7px; align-items: center; }
.links a { display: flex; align-items: center; gap: 6px; color: #235a81; line-height: 28px; }
.links svg { width: 23px; height: 23px; }
.console { position: absolute; left: 0; bottom: 0; width: 118px; height: 33px; background: #ccc; border: 1px solid #aaa; border-bottom: 0; border-left: 0; display: flex; align-items: center; gap: 7px; padding: 0 0 2px 11px; color: #444; box-shadow: 0 0 30px rgba(0,0,0,.08); }
.console svg { width: 21px; height: 22px; }

.vscroll { width: 25px; flex: none; background: #f1f1f1; display: flex; flex-direction: column; align-items: center; }
.arr-u, .arr-d { flex: none; height: 25px; display: flex; align-items: center; justify-content: center; }
.arr-d { margin-top: auto; height: 26px; }
.arr-u::before { content: ""; border: 6px solid transparent; border-top: 0; border-bottom: 6px solid #aaa; }
.arr-d::before { content: ""; border: 6px solid transparent; border-bottom: 0; border-top: 6px solid #555; }
.vthumb { width: 21px; height: 630px; background: #bebebe; }

.pagescroll { height: 22px; flex: none; background: #f1f1f1; display: flex; align-items: center; padding-right: 38px; }
.peek { height: 4px; flex: none; display: flex; }
.peek i { display: block; height: 100%; }
.pk1 { width: 72px; background: #d6e6ee; }
.pk2 { width: 515px; background: #f4f4f4; }
.pk3 { flex: 1; background: #d9e8ee; }
```
